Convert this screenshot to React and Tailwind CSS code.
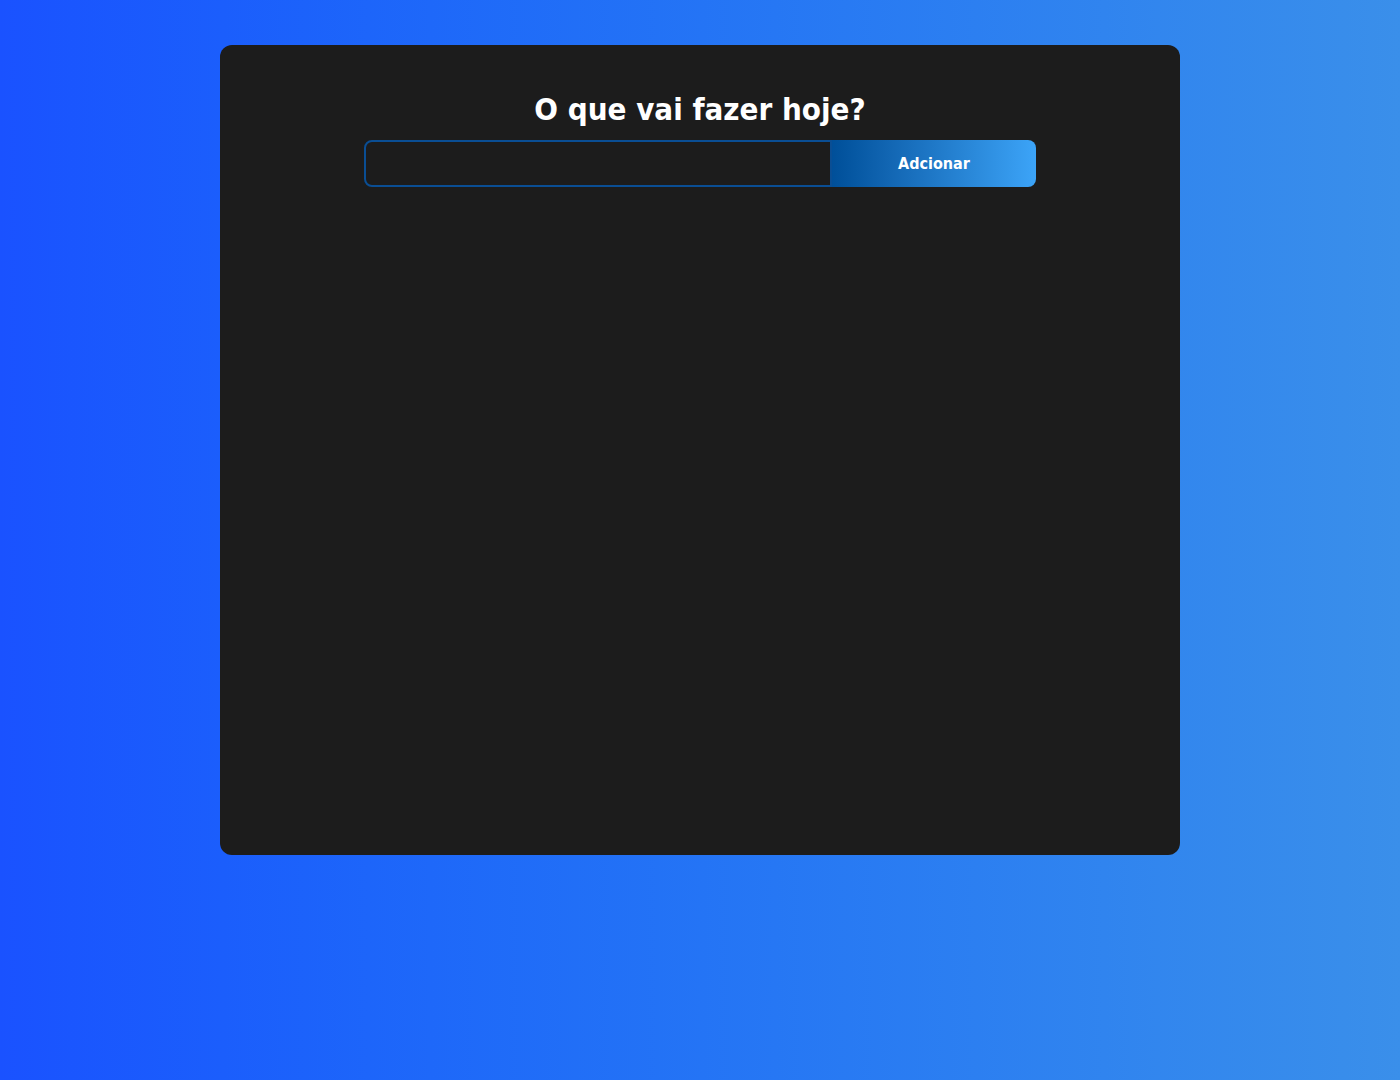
export default function App() {
  return (
    <div
      className="min-h-screen w-full bg-gradient-to-r from-[#1a52ff] to-[#3a8fea] flex justify-center pt-[45px]"
      style={{ fontFamily: '"DejaVu Sans Condensed", "DejaVu Sans", sans-serif' }}
    >
      <div className="w-[960px] h-[810px] bg-[#1c1c1c] rounded-xl flex flex-col items-center pt-[42px]">
        <h1 className="text-[31px] leading-[44px] font-bold text-white mb-[9px]">O que vai fazer hoje?</h1>
        <form className="flex w-[672px] h-[47px]" onSubmit={(e) => e.preventDefault()}>
          <input
            type="text"
            className="flex-1 min-w-0 bg-transparent border-2 border-[#0a4e94] rounded-l-lg outline-none text-white px-3"
          />
          <button
            type="submit"
            className="w-[204px] shrink-0 bg-gradient-to-r from-[#004f99] to-[#3ca4f8] text-white font-bold text-base rounded-r-lg"
          >
            Adcionar
          </button>
        </form>
      </div>
    </div>
  );
}
